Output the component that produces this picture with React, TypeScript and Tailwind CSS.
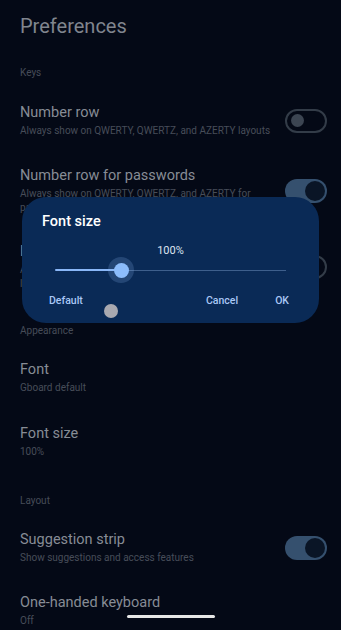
import React from "react";

const font = { fontFamily: "Roboto, 'Noto Sans', sans-serif" };

function Toggle({ on }: { on: boolean }) {
  if (on) {
    return (
      <div className="w-[42px] h-[24px] rounded-full bg-[#35506e] flex items-center justify-end pr-[2px] shrink-0">
        <div className="w-[20px] h-[20px] rounded-full bg-[#0a1526]" />
      </div>
    );
  }
  return (
    <div className="w-[42px] h-[24px] rounded-full border-2 border-[#333c48] flex items-center pl-[4px] shrink-0">
      <div className="w-[13px] h-[13px] rounded-full bg-[#3c4552]" />
    </div>
  );
}

function Row({
  title,
  sub,
  toggle,
  className = "",
}: {
  title: string;
  sub: string[];
  toggle?: boolean;
  className?: string;
}) {
  return (
    <div className={`flex items-center justify-between ${className}`}>
      <div className="flex flex-col">
        <div className="text-[14.5px] leading-[20px] text-[#878c95]">{title}</div>
        <div className="mt-px">
          {sub.map((s) => (
            <div key={s} className="text-[10px] leading-[14px] text-[#474d59] whitespace-nowrap">
              {s}
            </div>
          ))}
        </div>
      </div>
      {toggle !== undefined && <Toggle on={toggle} />}
    </div>
  );
}

function Label({ text, className = "" }: { text: string; className?: string }) {
  return <div className={`text-[10px] leading-[14px] text-[#464c58] ${className}`}>{text}</div>;
}

export default function App() {
  return (
    <div style={font} className="relative w-[341px] h-[630px] overflow-hidden bg-[#040916]">
      <div className="flex flex-col pl-5 pr-[14px]">
        <div className="pt-[12px] text-[20px] leading-[28px] text-[#80858e]">Preferences</div>

        <Label text="Keys" className="mt-[26px]" />
        <Row
          className="mt-[23px]"
          title="Number row"
          sub={["Always show on QWERTY, QWERTZ, and AZERTY layouts"]}
          toggle={false}
        />
        <Row
          className="mt-[28px]"
          title="Number row for passwords"
          sub={["Always show on QWERTY, QWERTZ, and AZERTY for", "password fields"]}
          toggle={true}
        />
        <Row
          className="mt-[27px]"
          title="Language switch key"
          sub={["Always show language switch key when multiple", "languages are enabled"]}
          toggle={false}
        />

        <Label text="Appearance" className="mt-[33px]" />
        <Row className="mt-[22px]" title="Font" sub={["Gboard default"]} />
        <Row className="mt-[29px]" title="Font size" sub={["100%"]} />

        <Label text="Layout" className="mt-[35px]" />
        <Row
          className="mt-[22px]"
          title="Suggestion strip"
          sub={["Show suggestions and access features"]}
          toggle={true}
        />
        <Row className="mt-[28px]" title="One-handed keyboard" sub={["Off"]} />
      </div>

      {/* dialog */}
      <div className="absolute left-[22px] top-[197px] w-[297px] h-[126px] rounded-[24px] bg-[#0a2a56] flex flex-col">
        <div className="pl-5 pt-[15px] text-[14.5px] leading-[20px] font-medium text-white">Font size</div>
        <div className="mt-[12px] text-center text-[11px] leading-[14px] text-[#dde4ef]">100%</div>
        <div className="relative mt-[2px] mx-[33px] h-[20px] flex items-center">
          <div className="w-[66px] h-[2px] bg-[#8ab7f7] rounded-l-full" />
          <div className="flex-1 h-px bg-[#3e5f8c]" />
          <div className="absolute left-[53px] top-[-3px] w-[26px] h-[26px] rounded-full bg-[#8ab7f7]/20 flex items-center justify-center">
            <div className="w-[15px] h-[15px] rounded-full bg-[#8cbcfb]" />
          </div>
        </div>
        <div className="mt-[14px] flex items-center text-[10.5px] leading-[14px] font-medium text-[#a9c7f5] pl-[27px] pr-[30px]">
          <span>Default</span>
          <span className="ml-auto">Cancel</span>
          <span className="ml-[37px]">OK</span>
        </div>
      </div>

      {/* touch indicator */}
      <div className="absolute left-[104px] top-[304px] w-[14px] h-[14px] rounded-full bg-[#a9a9b0]" />

      {/* home indicator */}
      <div className="absolute left-[127px] top-[615px] w-[88px] h-[3px] rounded-full bg-[#e6e6e6]" />
    </div>
  );
}
